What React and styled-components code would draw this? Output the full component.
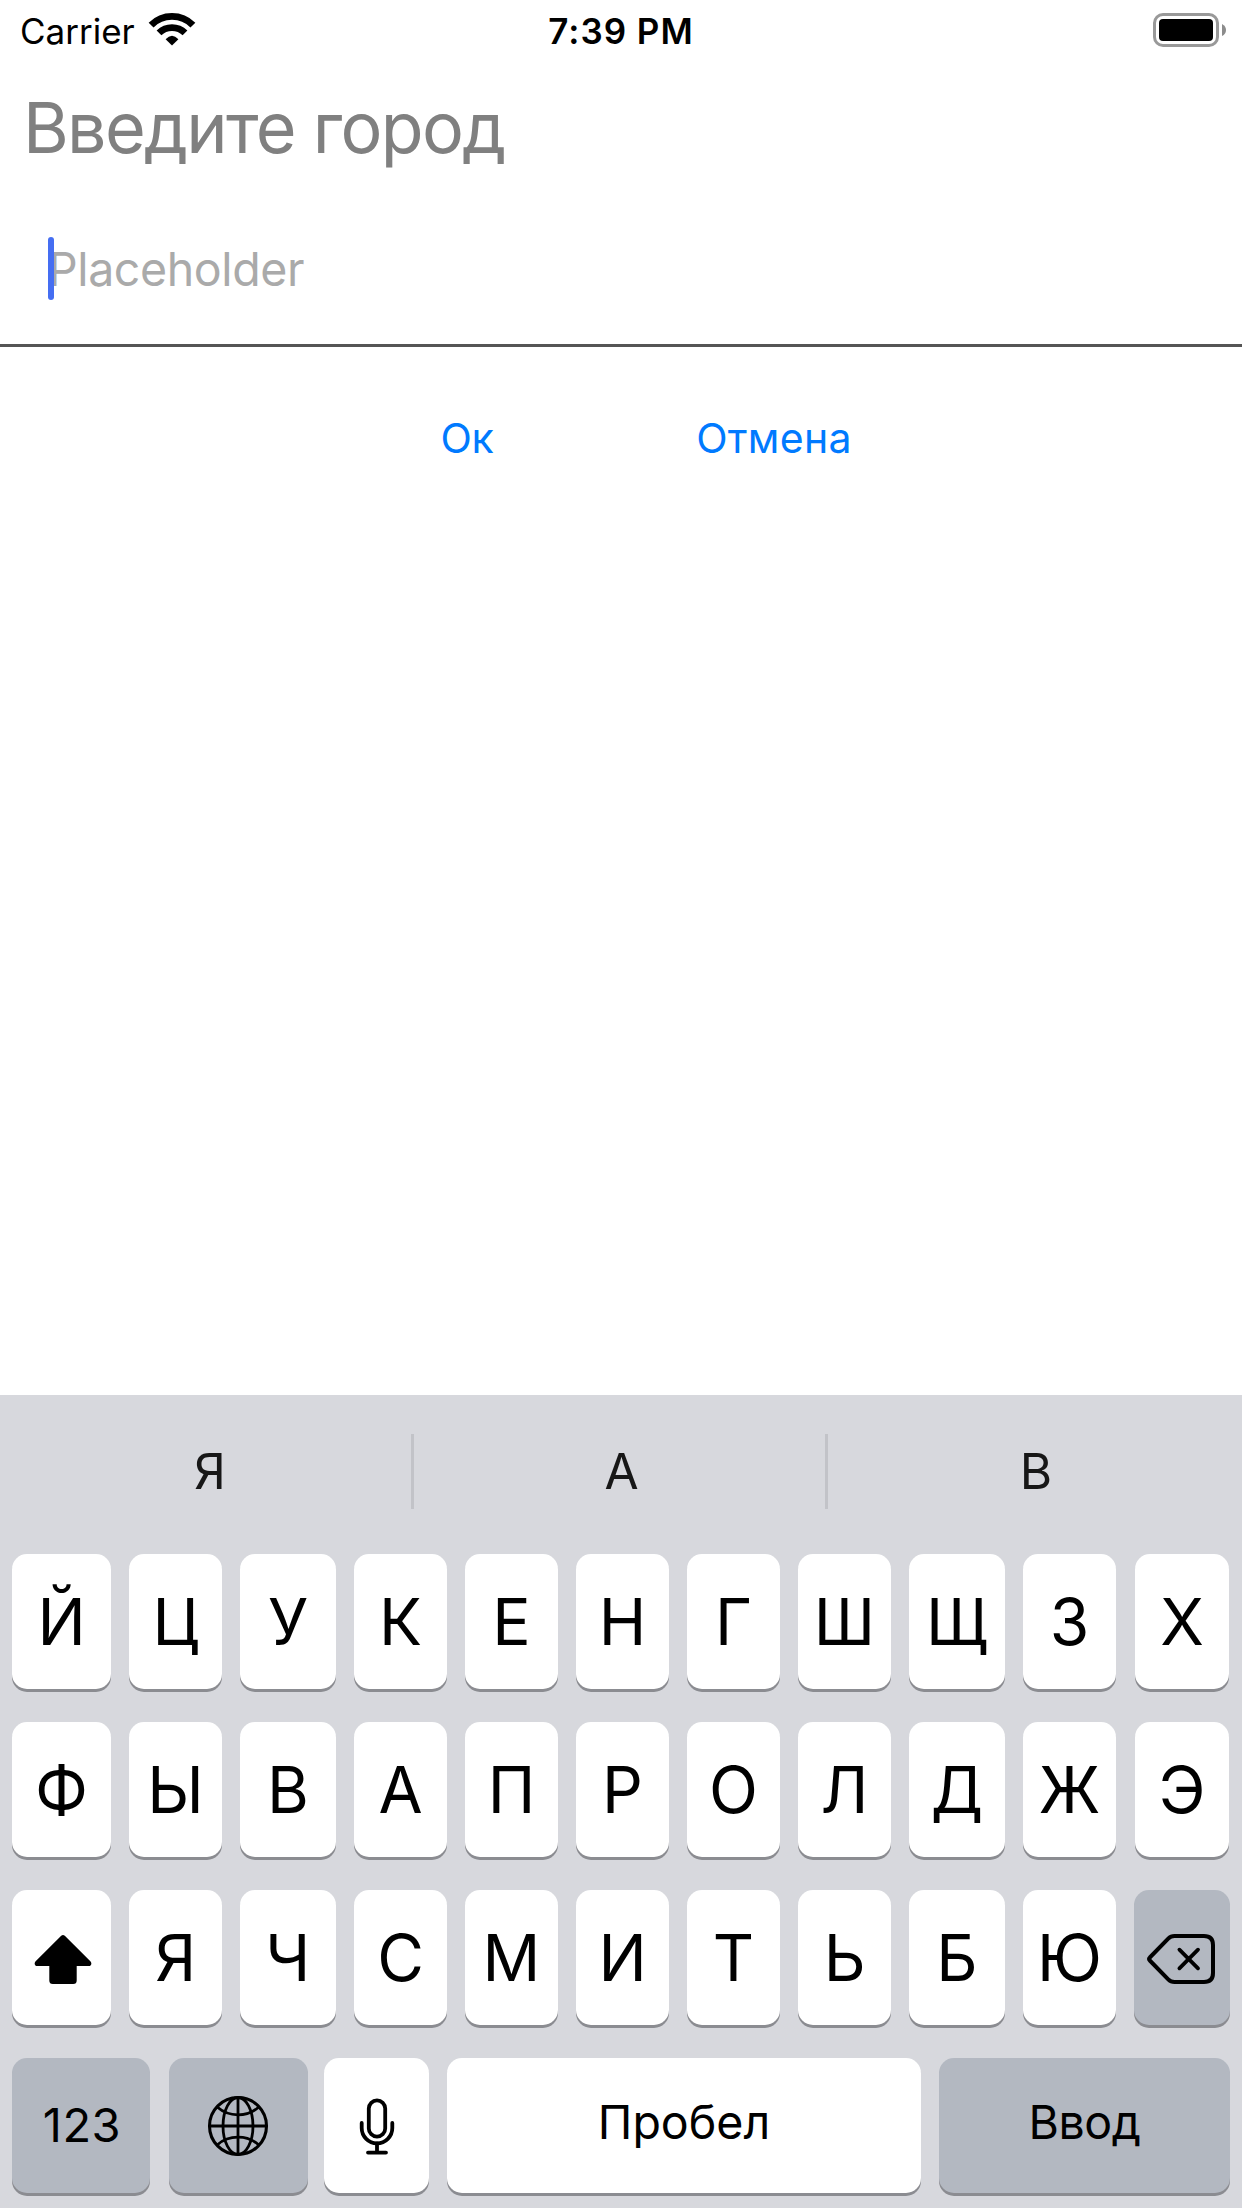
import React from "react";
import styled, { createGlobalStyle } from "styled-components";

const GlobalStyle = createGlobalStyle`
  * { box-sizing: border-box; }
  body { margin: 0; background: #fff; }
  button { font: inherit; border: 0; margin: 0; padding: 0; background: none; }
`;

const Screen = styled.div`
  display: flex;
  flex-direction: column;
  width: 1242px;
  height: 2208px;
  background: #fff;
  color: #000;
  font-family: Inter, "Liberation Sans", sans-serif;
  overflow: hidden;
`;

const StatusBar = styled.header`
  display: grid;
  grid-template-columns: 1fr auto 1fr;
  align-items: center;
  height: 62px;
  padding: 0 16px 0 20px;
  font-size: 35px;
  line-height: 62px;
`;

const Network = styled.div`
  display: flex;
  align-items: center;
  gap: 14px;
  svg { margin-bottom: 3px; }
`;

const Time = styled.div`
  font-weight: 600;
  letter-spacing: 1px;
  margin-left: -4px;
`;

const Battery = styled.div`
  justify-self: end;
  display: flex;
  height: 62px;
  padding-bottom: 2px;
  align-items: center;
`;

const Title = styled.h1`
  margin: 0;
  padding-left: 23px;
  font-size: 70px;
  font-weight: 400;
  line-height: 131px;
  letter-spacing: -1.7px;
  color: #808080;
`;

const Field = styled.div`
  display: flex;
  align-items: center;
  height: 154px;
  padding-left: 48px;
  border-bottom: 3px solid #555;
`;

const Caret = styled.span`
  width: 6px;
  height: 63px;
  margin-right: -6px;
  border-radius: 3px;
  background: #456ef2;
  z-index: 1;
`;

const Placeholder = styled.span`
  padding-top: 2px;
  font-size: 46.5px;
  line-height: 63px;
  letter-spacing: -0.4px;
  color: #aaa;
`;

const Actions = styled.div`
  display: flex;
  justify-content: center;
  height: 182px;
`;

const ActionButton = styled.button`
  width: 306px;
  padding-top: 1px;
  padding-right: ${(p) => p.$trail ?? 0}px;
  font-size: 41px;
  line-height: 181px;
  letter-spacing: ${(p) => p.$tracking}px;
  color: #007aff;
`;

const Keyboard = styled.section`
  display: flex;
  flex-direction: column;
  height: 813px;
  margin-top: auto;
  background: #d7d8dd;
`;

const Suggestions = styled.div`
  display: grid;
  grid-template-columns: 411px 414px 417px;
  align-items: center;
  height: 159px;
  padding-bottom: 6px;
`;

const Suggestion = styled.button`
  height: 75px;
  padding-left: ${(p) => p.$inset}px;
  font-size: 49.5px;
  line-height: 75px;
  color: #171717;

  & + & { border-left: 3px solid #c2c3c8; }
`;

const Rows = styled.div`
  display: flex;
  flex-direction: column;
  gap: 33px;
  padding-left: 12px;
`;

const Row = styled.div`
  display: flex;
  height: 135px;
`;

const Key = styled.button`
  display: flex;
  flex: none;
  align-items: center;
  justify-content: center;
  width: ${(p) => p.$width}px;
  height: 135px;
  margin-left: ${(p) => p.$before ?? 18}px;
  border-radius: 15px;
  background: ${(p) => (p.$muted ? "#b3b8c1" : "#fff")};
  box-shadow: 0 3px 0 #8b8c91;
  color: #000;
  font-size: 64px;
  line-height: 135px;

  &:first-child { margin-left: 0; }
`;

const KeyLabel = styled.span`
  font-size: ${(p) => p.$size ?? 46.5}px;
  line-height: 60px;
  letter-spacing: ${(p) => p.$tracking ?? 0}px;
  margin-bottom: ${(p) => p.$lift}px;
`;

const Digits = styled(KeyLabel)`
  padding-left: 2px;
`;

const Glyph = styled.svg`
  display: block;
  flex: none;
  overflow: visible;
  margin: ${(p) => p.$nudge ?? "0"};
`;

const WifiIcon = () => (
  <Glyph width="46" height="33" viewBox="0 0 46 33" fill="none" stroke="#000">
    <path d="M2.1 12.1A29.5 29.5 0 0 1 43.9 12.1" strokeWidth="6.9" />
    <path d="M10 19.9A18.5 18.5 0 0 1 36 19.9" strokeWidth="6.8" />
    <path d="M23 32.6L16.6 26.2Q23 19.2 29.4 26.2Z" fill="#000" stroke="none" />
  </Glyph>
);

const BatteryIcon = () => (
  <Glyph width="73" height="34" viewBox="0 0 73 34">
    <rect x="1.5" y="1.5" width="63" height="31" rx="8.5" fill="none" stroke="#999" strokeWidth="3" />
    <rect x="6" y="6" width="54" height="22" rx="4" />
    <path d="M69 11Q73 13 73 17T69 23Z" fill="#8c8c8c" />
  </Glyph>
);

const ShiftIcon = () => (
  <Glyph width="58" height="50" viewBox="0 0 58 50" $nudge="3px 0 0 3px">
    <path d="M27.2 1.8Q29 0 30.8 1.8L56.6 27.5Q58.4 30.2 56 32H42.7V46.5Q42.7 50 39.2 50H18.8Q15.3 50 15.3 46.5V32H2Q-.4 30.2 1.4 27.5Z" />
  </Glyph>
);

const BackspaceIcon = () => (
  <Glyph
    width="68"
    height="50"
    viewBox="0 0 68 50"
    fill="none"
    stroke="#000"
    strokeWidth="4"
    strokeLinecap="round"
    strokeLinejoin="round"
    $nudge="3px 2px 0 0"
  >
    <path d="M27.5 2H57Q66 2 66 11V39Q66 48 57 48H27.5Q23.8 48 21.2 45.3L2.8 26.5Q1.2 25 2.8 23.5L21.2 4.7Q23.8 2 27.5 2Z" />
    <path d="M32.4 15.7L51 34.3M51 15.7L32.4 34.3" strokeWidth="3.8" />
  </Glyph>
);

const GlobeIcon = () => (
  <Glyph width="60" height="60" viewBox="0 0 60 60" fill="none" stroke="#000" strokeWidth="2.8" $nudge="1px 1px 0 0">
    <circle cx="30" cy="30" r="28.5" strokeWidth="3.1" />
    <ellipse cx="30" cy="30" rx="15" ry="28.5" />
    <path d="M30 1.4V58.6M1.4 30H58.6" />
    <path d="M9.5 11.3Q18 18.8 30 18.8T50.5 11.3M9.5 48.7Q18 41.2 30 41.2T50.5 48.7" />
  </Glyph>
);

const MicIcon = () => (
  <Glyph
    width="36"
    height="57"
    viewBox="0 0 36 57"
    fill="none"
    stroke="#000"
    strokeWidth="3.8"
    strokeLinecap="round"
    $nudge="2px 0 0 1px"
  >
    <rect x="9.8" y="2.4" width="16.4" height="36.2" rx="8.2" />
    <path d="M2.7 25V30A15.3 15.3 0 0 0 33.3 30V25" />
    <path d="M18 45.5V54.5M9 54.6H27" />
  </Glyph>
);

const WIDTHS = [99, 93, 96, 93, 93, 93, 93, 93, 96, 93, 94];
const TOP_ROW = "ЙЦУКЕНГШЩЗХ";
const HOME_ROW = "ФЫВАПРОЛДЖЭ";
const BOTTOM_ROW = "ЯЧСМИТЬБЮ";

const LetterRow = ({ letters }) => (
  <Row>
    {[...letters].map((letter, i) => (
      <Key key={letter} $width={WIDTHS[i]} $before={i === 10 ? 19 : 18}>
        {letter}
      </Key>
    ))}
  </Row>
);

export default function App() {
  return (
    <Screen>
      <GlobalStyle />
      <StatusBar>
        <Network>
          Carrier
          <WifiIcon />
        </Network>
        <Time>7:39 PM</Time>
        <Battery>
          <BatteryIcon />
        </Battery>
      </StatusBar>

      <Title>Введите город</Title>
      <Field>
        <Caret />
        <Placeholder>Placeholder</Placeholder>
      </Field>
      <Actions>
        <ActionButton $tracking={-0.4} $trail={2}>Ок</ActionButton>
        <ActionButton $tracking={0.3}>Отмена</ActionButton>
      </Actions>

      <Keyboard>
        <Suggestions>
          <Suggestion $inset={9}>Я</Suggestion>
          <Suggestion $inset={4}>А</Suggestion>
          <Suggestion $inset={2}>В</Suggestion>
        </Suggestions>
        <Rows>
          <LetterRow letters={TOP_ROW} />
          <LetterRow letters={HOME_ROW} />
          <Row>
            <Key $width={99} aria-label="Shift">
              <ShiftIcon />
            </Key>
            {[...BOTTOM_ROW].map((letter, i) => (
              <Key key={letter} $width={WIDTHS[i + 1]}>
                {letter}
              </Key>
            ))}
            <Key $width={96} $muted aria-label="Delete">
              <BackspaceIcon />
            </Key>
          </Row>
          <Row>
            <Key $width={138} $muted>
              <Digits $size={47} $tracking={0.5} $lift={2}>123</Digits>
            </Key>
            <Key $width={139} $before={19} $muted aria-label="Language">
              <GlobeIcon />
            </Key>
            <Key $width={105} $before={16} aria-label="Dictate">
              <MicIcon />
            </Key>
            <Key $width={474}>
              <KeyLabel $lift={8}>Пробел</KeyLabel>
            </Key>
            <Key $width={291} $muted>
              <KeyLabel $tracking={-0.5} $lift={8}>Ввод</KeyLabel>
            </Key>
          </Row>
        </Rows>
      </Keyboard>
    </Screen>
  );
}
